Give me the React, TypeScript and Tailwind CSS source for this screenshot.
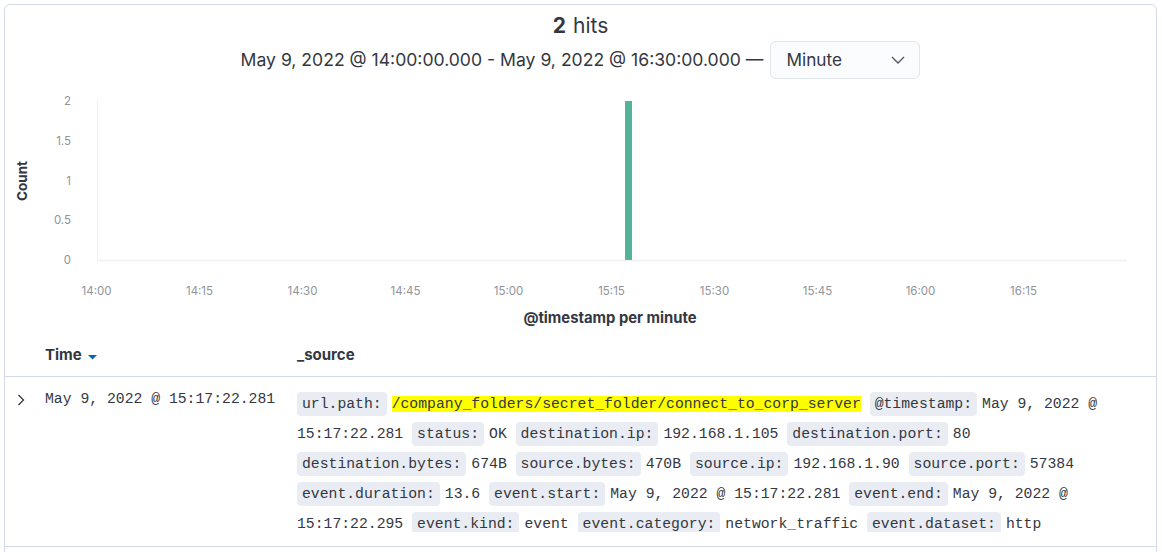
import React from "react";

const fields: { k: string; v: string; hl?: boolean }[] = [
  { k: "url.path:", v: "/company_folders/secret_folder/connect_to_corp_server", hl: true },
  { k: "@timestamp:", v: "May 9, 2022 @ 15:17:22.281" },
  { k: "status:", v: "OK" },
  { k: "destination.ip:", v: "192.168.1.105" },
  { k: "destination.port:", v: "80" },
  { k: "destination.bytes:", v: "674B" },
  { k: "source.bytes:", v: "470B" },
  { k: "source.ip:", v: "192.168.1.90" },
  { k: "source.port:", v: "57384" },
  { k: "event.duration:", v: "13.6" },
  { k: "event.start:", v: "May 9, 2022 @ 15:17:22.281" },
  { k: "event.end:", v: "May 9, 2022 @ 15:17:22.295" },
  { k: "event.kind:", v: "event" },
  { k: "event.category:", v: "network_traffic" },
  { k: "event.dataset:", v: "http" },
];

const xTicks = ["14:00", "14:15", "14:30", "14:45", "15:00", "15:15", "15:30", "15:45", "16:00", "16:15"];
const yTicks: [string, number][] = [
  ["2", 101],
  ["1.5", 141],
  ["1", 181],
  ["0.5", 220],
  ["0", 260],
];

function Chart() {
  return (
    <svg width={1151} height={250} className="block" style={{ fontFamily: "Inter, 'Noto Sans', sans-serif" }}>
      <g transform="translate(-5,-85)">
        <text
          x={22}
          y={181}
          transform="rotate(-90 22 181)"
          textAnchor="middle"
          dominantBaseline="central"
          fontSize={13.5}
          fontWeight={700}
          fill="#343741"
        >
          Count
        </text>
        {yTicks.map(([l, y]) => (
          <text key={l} x={71} y={y} textAnchor="end" dominantBaseline="central" fontSize={11.5} fill="#8f949c">
            {l}
          </text>
        ))}
        <line x1={97.5} y1={100} x2={97.5} y2={260} stroke="#eef0f3" strokeWidth={1} />
        <line x1={97} y1={260.5} x2={1127} y2={260.5} stroke="#eef0f3" strokeWidth={1.5} />
        <rect x={625} y={101} width={7} height={159} fill="#54b399" />
        {xTicks.map((t, i) => (
          <text
            key={t}
            x={96.5 + i * 103}
            y={291}
            textAnchor="middle"
            dominantBaseline="central"
            fontSize={11.5}
            fill="#8f949c"
          >
            {t}
          </text>
        ))}
        <text x={610} y={318} textAnchor="middle" dominantBaseline="central" fontSize={14.8} fontWeight={700} fill="#343741">
          @timestamp per minute
        </text>
      </g>
    </svg>
  );
}

export default function App() {
  return (
    <div className="w-[1162px] h-[552px] overflow-hidden bg-white pl-[4px] pt-[4px]" style={{ fontFamily: "Inter, 'Noto Sans', sans-serif" }}>
      <div className="w-[1153px] h-[700px] border border-[#d3dae6] rounded-[6px] bg-white text-[#343741]">
        <div className="mt-[9px] h-[24px] flex items-center justify-center text-[21px] leading-[24px]">
          <span className="font-bold">2</span>
          <span className="ml-[7px]">hits</span>
        </div>
        <div className="mt-[3px] h-[38px] flex items-center justify-center gap-[7px]">
          <span className="text-[17.6px] text-[#343741]">May 9, 2022 @ 14:00:00.000 - May 9, 2022 @ 16:30:00.000 —</span>
          <div className="w-[150px] h-[38px] rounded-[6px] border border-[#e1e5ec] bg-[#fbfcfd] flex items-center justify-between pl-[15px] pr-[14px]">
            <span className="text-[17.2px]">Minute</span>
            <svg width={14} height={8} viewBox="0 0 14 8">
              <polyline points="1,1 7,7 13,1" fill="none" stroke="#535966" strokeWidth={1.4} />
            </svg>
          </div>
        </div>
        <div className="mt-[6px]">
          <Chart />
        </div>
        <div className="h-[42px] flex items-center border-b border-[#d3dae6] text-[15px] font-bold">
          <div className="w-[40px]" />
          <div className="w-[252px] flex items-center">
            <span>Time</span>
            <svg width={9} height={5} viewBox="0 0 9 5" className="ml-[6px] mt-[3px]">
              <polygon points="0,0 9,0 4.5,4.5" fill="#006bb4" />
            </svg>
          </div>
          <div>_source</div>
        </div>
        <div className="flex border-b border-[#d3dae6]" style={{ fontFamily: "'Liberation Mono', 'DejaVu Sans Mono', monospace" }}>
          <div className="w-[40px] pt-[17px] pl-[12px]">
            <svg width={8} height={12} viewBox="0 0 8 12">
              <polyline points="1.5,1 6.5,6 1.5,11" fill="none" stroke="#343741" strokeWidth={1.3} />
            </svg>
          </div>
          <div className="w-[252px] pt-[12px] text-[14.75px] leading-[20px] text-[#343741]">May 9, 2022 @ 15:17:22.281</div>
          <div className="w-[845px] pt-[12px] pb-[14px]">
            <div className="max-h-[143px] overflow-hidden text-[14.75px] leading-[30px] text-[#343741]">
              {fields.map((f, i) => (
                <React.Fragment key={i}>
                  <span className="bg-[#e9edf3] rounded-[4px] px-[5px] py-[4px] mr-[5px]">{f.k}</span>
                  <span className={f.hl ? "bg-[#ffff00]" : ""}>{f.v}</span>{" "}
                </React.Fragment>
              ))}
            </div>
          </div>
        </div>
      </div>
    </div>
  );
}
